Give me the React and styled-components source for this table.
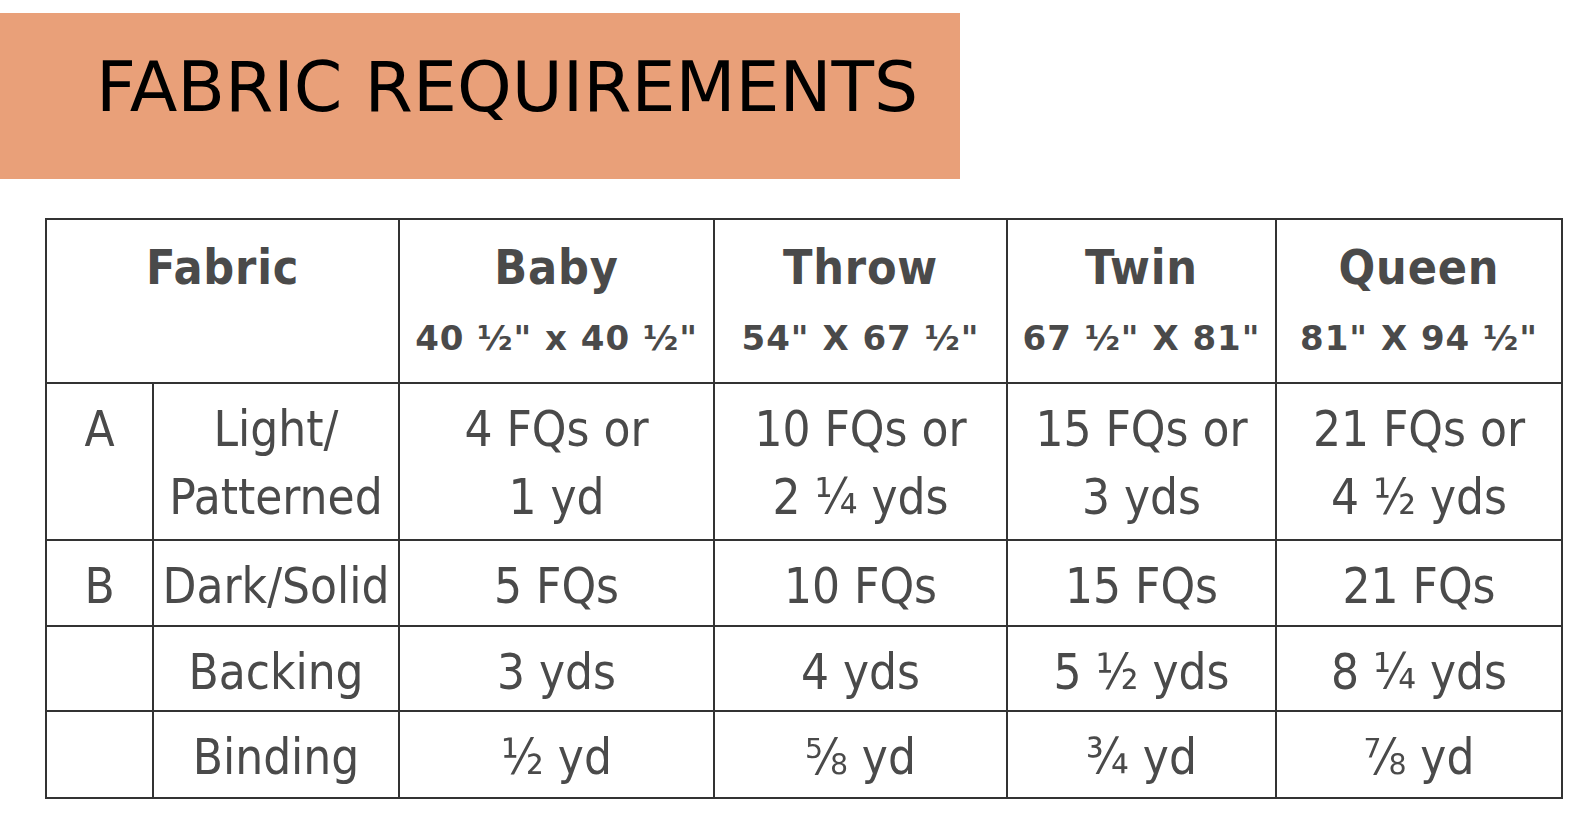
import React from "react";
import styled, { createGlobalStyle } from "styled-components";

const Global = createGlobalStyle`
  html, body { margin: 0; padding: 0; background: #ffffff; }
  body { font-family: "DejaVu Sans Condensed", "DejaVu Sans", sans-serif; font-stretch: condensed; }
`;

const Page = styled.div`
  width: 1578px;
  height: 822px;
  padding-top: 13px;
  box-sizing: border-box;
  background: #fff;
`;

const Banner = styled.header`
  width: 960px;
  height: 166px;
  background: #e9a079;
  display: flex;
  align-items: center;
  padding-left: 96px;
  padding-bottom: 18px;
  box-sizing: border-box;
`;

const Title = styled.h1`
  margin: 0;
  font-family: "DejaVu Sans", sans-serif;
  font-stretch: normal;
  font-weight: 400;
  font-size: 69.6px;
  color: #000;
  line-height: 1;
`;

const TableWrap = styled.div`
  padding: 39px 0 0 45px;
`;

const Table = styled.table`
  border-collapse: collapse;
  table-layout: fixed;
  width: 1516px;
  color: #4a4a4a;
  font-family: "DejaVu Sans Condensed", "DejaVu Sans", sans-serif;
  font-stretch: condensed;
  td, th { border: 2px solid #333; padding: 0; text-align: center; }
`;

const HeadCell = styled.th`
  vertical-align: top;
  padding-top: 19px !important;
`;

const SizeName = styled.div`
  font-size: 48px;
  font-weight: 700;
  line-height: 56px;
  letter-spacing: 0.8px;
`;

const SizeDims = styled.div`
  font-family: "DejaVu Sans", sans-serif;
  font-stretch: normal;
  font-size: 34px;
  font-weight: 700;
  line-height: 40px;
  letter-spacing: 1px;
  margin-top: 23px;
`;

const Row = styled.tr`
  height: ${(p) => p.$h}px;
`;

const Cell = styled.td`
  font-size: 49px;
  line-height: 68px;
  vertical-align: top;
  padding-top: 12px !important;
  white-space: nowrap;
`;

const sizes = [
  { name: "Baby", dims: "40 ½\" x 40 ½\"" },
  { name: "Throw", dims: "54\" X 67 ½\"" },
  { name: "Twin", dims: "67 ½\" X 81\"" },
  { name: "Queen", dims: "81\" X 94 ½\"" },
];

const rows = [
  { key: "A", label: ["Light/", "Patterned"], vals: [["4 FQs or", "1 yd"], ["10 FQs or", "2 ¼ yds"], ["15 FQs or", "3 yds"], ["21 FQs or", "4 ½ yds"]], h: 157 },
  { key: "B", label: ["Dark/Solid"], vals: [["5 FQs"], ["10 FQs"], ["15 FQs"], ["21 FQs"]], h: 86 },
  { key: "", label: ["Backing"], vals: [["3 yds"], ["4 yds"], ["5 ½ yds"], ["8 ¼ yds"]], h: 85 },
  { key: "", label: ["Binding"], vals: [["½ yd"], ["⅝ yd"], ["¾ yd"], ["⅞ yd"]], h: 87 },
];

const Lines = ({ items }) =>
  items.map((t, i) => (
    <React.Fragment key={i}>
      {i > 0 && <br />}
      {t}
    </React.Fragment>
  ));

export default function App() {
  return (
    <>
      <Global />
      <Page>
        <Banner>
          <Title>FABRIC REQUIREMENTS</Title>
        </Banner>
        <TableWrap>
          <Table>
            <colgroup>
              <col style={{ width: 107 }} />
              <col style={{ width: 246 }} />
              <col style={{ width: 315 }} />
              <col style={{ width: 293 }} />
              <col style={{ width: 269 }} />
              <col style={{ width: 286 }} />
            </colgroup>
            <thead>
              <Row $h={164}>
                <HeadCell colSpan={2}>
                  <SizeName>Fabric</SizeName>
                </HeadCell>
                {sizes.map((s) => (
                  <HeadCell key={s.name}>
                    <SizeName>{s.name}</SizeName>
                    <SizeDims>{s.dims}</SizeDims>
                  </HeadCell>
                ))}
              </Row>
            </thead>
            <tbody>
              {rows.map((r, i) => (
                <Row key={i} $h={r.h}>
                  <Cell>{r.key}</Cell>
                  <Cell>
                    <Lines items={r.label} />
                  </Cell>
                  {r.vals.map((v, j) => (
                    <Cell key={j}>
                      <Lines items={v} />
                    </Cell>
                  ))}
                </Row>
              ))}
            </tbody>
          </Table>
        </TableWrap>
      </Page>
    </>
  );
}
